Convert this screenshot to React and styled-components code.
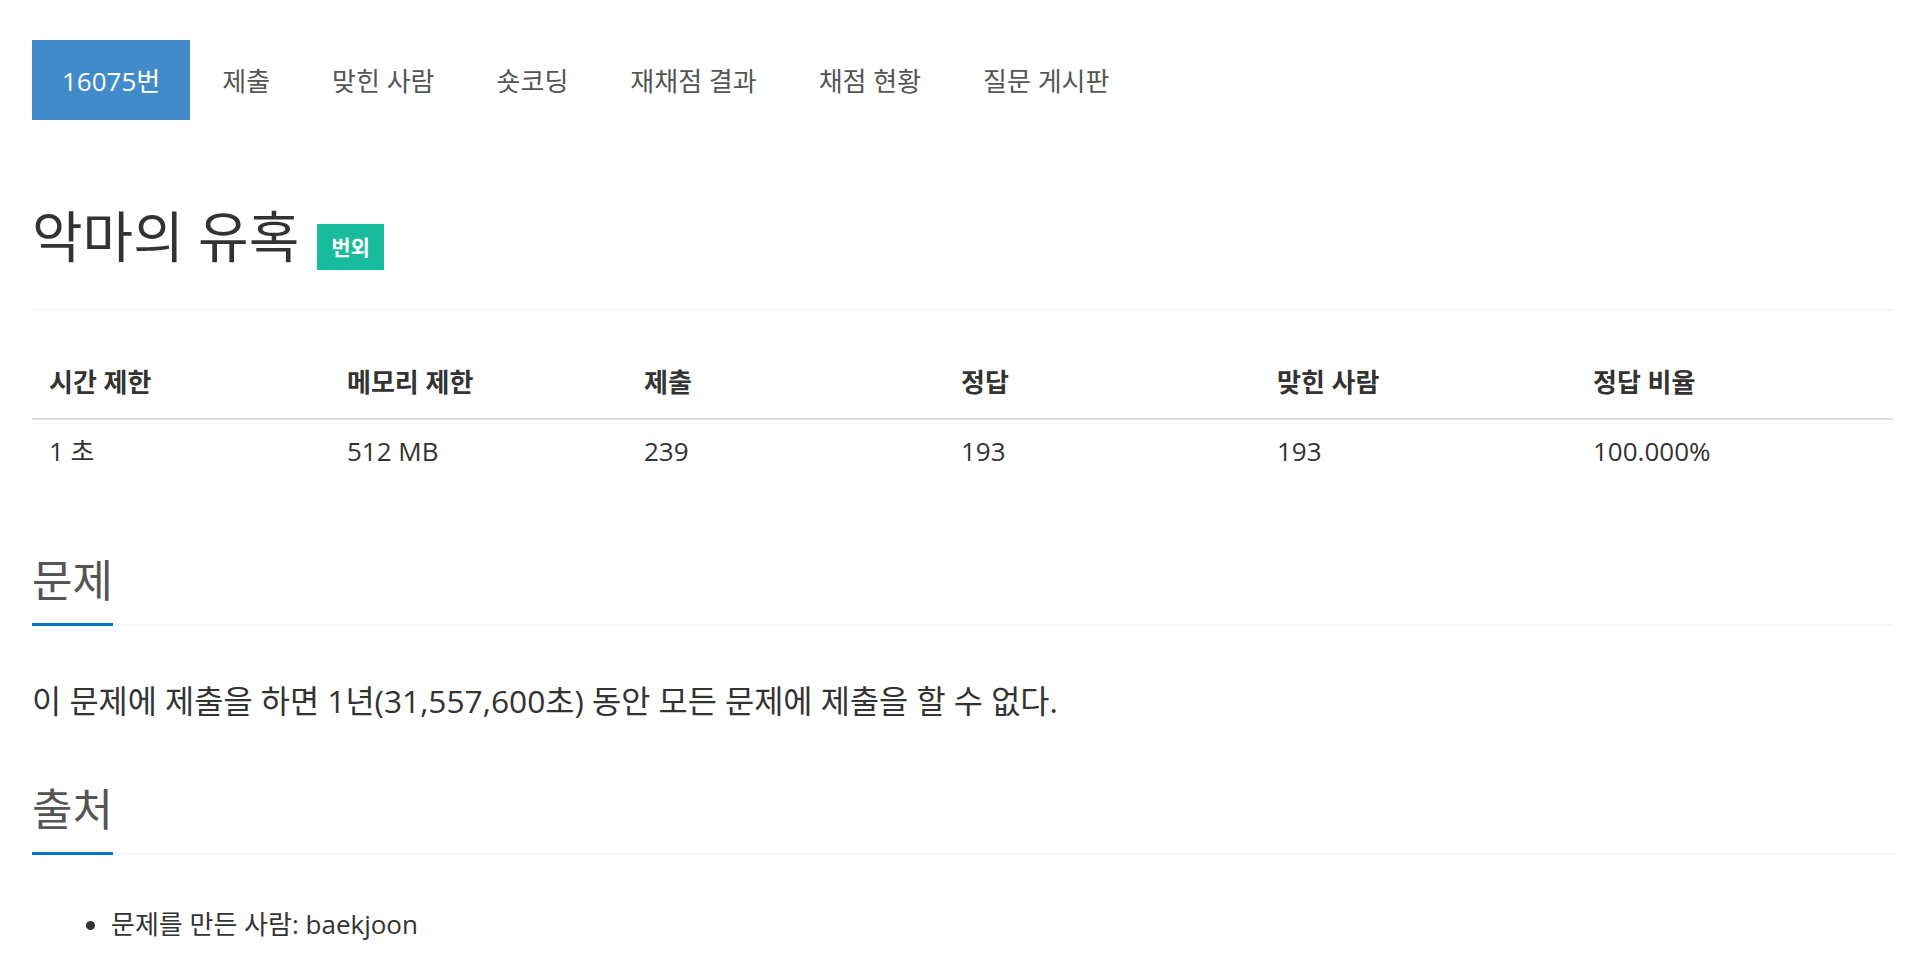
import React from "react";
import styled, { createGlobalStyle } from "styled-components";

const tabs = ["16075번", "제출", "맞힌 사람", "숏코딩", "재채점 결과", "채점 현황", "질문 게시판"];

const columns = [
  { title: "시간 제한", value: "1 초", width: 298 },
  { title: "메모리 제한", value: "512 MB", width: 297 },
  { title: "제출", value: "239", width: 317 },
  { title: "정답", value: "193", width: 316 },
  { title: "맞힌 사람", value: "193", width: 316 },
  { title: "정답 비율", value: "100.000%", width: 317 },
];

const GlobalStyle = createGlobalStyle`
  body {
    margin: 0;
    background: #fff;
    font-family: "Open Sans", "Noto Sans CJK KR", sans-serif;
    color: #333;
  }
`;

const Page = styled.div`
  padding: 40px 27px 40px 32px;
`;

const Nav = styled.ul`
  display: flex;
  list-style: none;
  margin: 0;
  padding: 0;
`;

const Tab = styled.li`
  height: 80px;
  line-height: 83px;
  padding: 0 ${({ $active }) => ($active ? 30 : 31)}px;
  margin-right: ${({ $active }) => ($active ? 1 : 0)}px;
  font-size: 26px;
  overflow: hidden;
  color: ${({ $active }) => ($active ? "#fff" : "#555")};
  background: ${({ $active }) => ($active ? "#428bca" : "transparent")};
`;

const Header = styled.div`
  margin-top: 86px;
  padding-bottom: 43px;
  border-bottom: 1px solid #eee;
`;

const Title = styled.h1`
  display: flex;
  align-items: center;
  height: 60px;
  margin: 0;
  font-size: 55px;
  line-height: 60px;
  font-weight: 400;
  color: #333;
`;

const Badge = styled.span`
  margin: 21px 0 0 18px;
  padding: 0 14px;
  height: 46px;
  line-height: 46px;
  font-size: 21px;
  font-weight: 700;
  color: #fff;
  background: #18bc9c;
`;

const Table = styled.table`
  width: 100%;
  margin-top: 37px;
  border-collapse: collapse;
  table-layout: fixed;
`;

const Th = styled.th`
  text-align: left;
  padding: 19px 17px;
  font-size: 26px;
  line-height: 33px;
  font-weight: 700;
  color: #333;
  border-bottom: 2px solid #ddd;
`;

const Td = styled.td`
  padding: 15px 17px;
  font-size: 26px;
  line-height: 33px;
  color: #333;
`;

const Section = styled.section`
  margin-top: ${({ $top }) => $top}px;
`;

const Headline = styled.div`
  border-bottom: 1px dotted #e4e9f0;
`;

const HeadlineTitle = styled.h2`
  display: inline-block;
  margin: 0 0 -2px;
  padding-bottom: 19px;
  font-size: 44px;
  line-height: 48px;
  font-weight: 400;
  color: #555;
  border-bottom: 3px solid #0076c0;
`;

const Paragraph = styled.p`
  margin: 54px 0 0;
  font-size: 31.7px;
  line-height: 44px;
  color: #333;
`;

const List = styled.ul`
  margin: 50px 0 0;
  padding-left: 79px;
  font-size: 26px;
  line-height: 40px;
  color: #333;
`;

export default function App() {
  return (
    <Page>
      <GlobalStyle />
      <Nav>
        {tabs.map((t, i) => (
          <Tab key={t} $active={i === 0}>
            {t}
          </Tab>
        ))}
      </Nav>

      <Header>
        <Title>
          악마의 유혹
          <Badge>번외</Badge>
        </Title>
      </Header>

      <Table>
        <colgroup>
          {columns.map((c) => (
            <col key={c.title} style={{ width: c.width }} />
          ))}
        </colgroup>
        <thead>
          <tr>
            {columns.map((c) => (
              <Th key={c.title}>{c.title}</Th>
            ))}
          </tr>
        </thead>
        <tbody>
          <tr>
            {columns.map((c) => (
              <Td key={c.title}>{c.value}</Td>
            ))}
          </tr>
        </tbody>
      </Table>

      <Section $top={73}>
        <Headline>
          <HeadlineTitle>문제</HeadlineTitle>
        </Headline>
        <Paragraph>이 문제에 제출을 하면 1년(31,557,600초) 동안 모든 문제에 제출을 할 수 없다.</Paragraph>
      </Section>

      <Section $top={62}>
        <Headline>
          <HeadlineTitle>출처</HeadlineTitle>
        </Headline>
        <List>
          <li>문제를 만든 사람: baekjoon</li>
        </List>
      </Section>
    </Page>
  );
}
